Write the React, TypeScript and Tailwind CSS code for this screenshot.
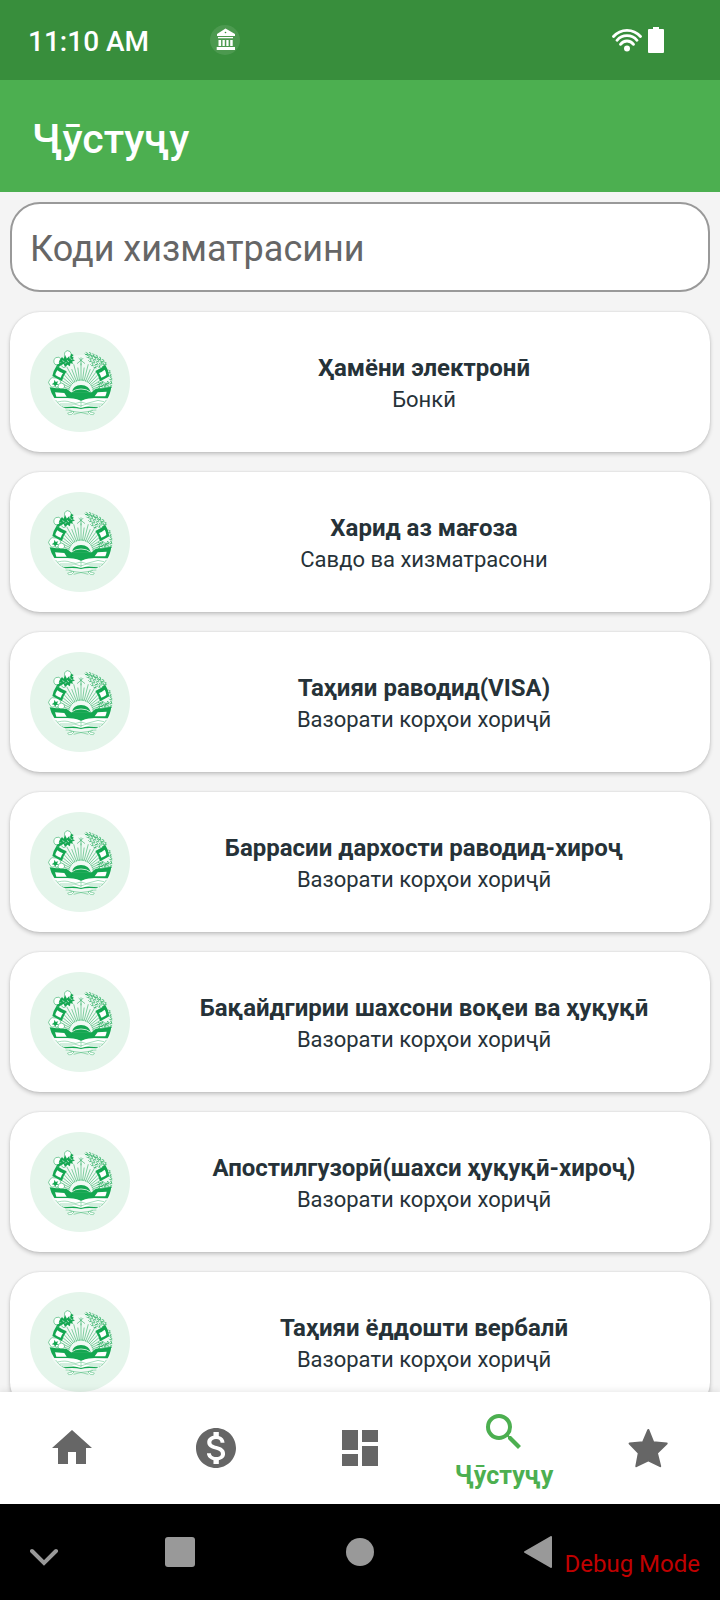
import { MdDashboard, MdHome, MdMonetizationOn, MdSearch } from "react-icons/md";

const services = [
  { title: "Ҳамёни электронӣ", category: "Бонкӣ" },
  { title: "Харид аз мағоза", category: "Савдо ва хизматрасони" },
  { title: "Таҳияи раводид(VISA)", category: "Вазорати корҳои хориҷӣ" },
  { title: "Баррасии дархости раводид-хироҷ", category: "Вазорати корҳои хориҷӣ" },
  { title: "Бақайдгирии шахсони воқеи ва ҳуқуқӣ", category: "Вазорати корҳои хориҷӣ" },
  { title: "Апостилгузорӣ(шахси ҳуқуқӣ-хироҷ)", category: "Вазорати корҳои хориҷӣ" },
  { title: "Таҳияи ёддошти вербалӣ", category: "Вазорати корҳои хориҷӣ" },
];

const rays = Array.from({ length: 25 }, (_, i) => {
  const angle = Math.PI * (1 + (i + 0.5) / 25);
  const end = i % 2 === 0 ? 88 : 76;
  return {
    x1: 108 + Math.cos(angle) * 36,
    y1: 143 + Math.sin(angle) * 36,
    x2: 108 + Math.cos(angle) * end,
    y2: 143 + Math.sin(angle) * end,
  };
});

const grains = [
  [122, 22], [132, 22], [142, 26], [152, 30], [162, 36], [171, 43], [178, 51], [127, 31],
  [137, 33], [147, 37], [156, 43], [165, 50], [173, 58], [133, 42], [143, 45], [152, 52],
  [160, 59], [139, 54], [148, 61], [190, 75], [193, 86], [195, 97], [195, 108], [194, 119],
  [186, 109], [185, 120], [177, 113], [176, 123], [168, 107], [167, 118], [159, 112], [159, 123],
];

const Emblem = () => (
  <svg viewBox="-45 -39 300 300" className="h-full w-full" fill="none" aria-hidden="true">
    <path d="M20 118a88 88 0 1 1 176 0v40q-22 44-88 44t-88-44z" fill="#fff" fillOpacity=".45" />
    {/* Sun */}
    <g stroke="#14a751" strokeWidth="2" strokeOpacity=".8">
      {rays.map((ray, i) => (
        <line key={i} {...ray} />
      ))}
      <path d="M71 142a37 37 0 0 1 74 0" strokeDasharray="4 3" />
    </g>
    <path d="M108 37v24M96 56l12-10 12 10M101 39l7 7 7-7" stroke="#14a751" strokeWidth="1.6" />
    {/* Wheat */}
    <g stroke="#14a751" strokeWidth="2.2" strokeOpacity=".85">
      {grains.map(([x, y]) => (
        <path key={`${x}-${y}`} d={`M${x} ${y}l6 3-5 5-4-4M${x + 2} ${y + 7}l5 1`} />
      ))}
      <path d="M121 28q48 6 57 37M188 108q-3 14-12 22" strokeWidth="1.4" />
    </g>
    {/* Cotton */}
    <g fill="#fff" stroke="#14a751" strokeWidth="1.6">
      <path d="M30 58q-8-11 2-20 11-5 17 5 7 7-1 15-8 7-18 0z" />
      <path d="M60 34q-5-13 7-17 10 0 12 10 3 13-7 15-9 0-12-8z" />
      <path d="M50 62q-3-10 5-14 10-1 11 8-1 11-9 12-6-1-7-6z" />
      <path d="M15 121q-9-9 0-18 5-8 16-4 9-4 14 7 5 9 1 17-14 6-18 2-8 5-13-4z" />
      <path d="M39 126q0-12 10-12 11 1 10 12-5 7-12 6-6-1-8-6z" />
    </g>
    <g fill="#14a751">
      <path d="M44 45l7-9 5 5 4-11 5 11 8-8 1 9 11-7-2 8 7 3-9 4 4 6-9-1-1 9-8-5-7 7-4-9-9 4 2-9-8 1z" />
      <path d="M34 59l8-3 2-5 5 3-2 8-8 5zM78 26l8 4-5 5 6 4-8 4-4-7zM29 104l3 7 8-2-4 6 4 4-7 1-2 6-4-7-7-1 6-4z" />
    </g>
    <path d="M52 47l6 3M66 46l6 5M77 42l5 2M60 56l4-5" stroke="#e5f5eb" strokeWidth="2" />
    {/* Ribbon */}
    <g fill="#14a751">
      <path d="M35 62q13 9 30 17-10 13-14 29-14-6-29-15 3-17 13-31z" />
      <path d="M181 60q-13 10-30 18 10 14 14 31 14-7 28-15-2-19-12-34z" />
      <path d="M14 127q22 5 50 4l14 11h62l13-11q24 0 46-6-3 22-11 35l-40-1q-20 0-29 5-11 7-22 0-9-5-29-5H28q-10-14-14-32z" />
      <path d="M80 143q4-23 28-23t30 23z" />
    </g>
    <path d="M37 76q8 6 17 9-5 6-7 13-9-3-16-8 1-7 6-14zM179 74q-8 7-17 10 5 7 7 14 9-3 15-8 0-8-5-16zM30 142l28 2 7 11H34q-2-7-4-13zM185 140l-27 2-9 12h32q3-7 4-14z" fill="#fff" />
    <path d="M80 141q10-9 28-9t28 9" stroke="#e5f5eb" strokeWidth="2.5" />
    {/* Book */}
    <path d="M30 162h48q24 0 30 7 8-7 30-7h46q-8 19-22 26-36-4-54 2-19-6-54-2-17-9-24-26z" fill="#fff" />
    <g stroke="#14a751" strokeWidth="1.5" strokeOpacity=".75">
      <path d="M32 165q9 15 23 22M184 165q-9 15-22 22M38 171q24-6 39 1t31-1q15 9 33 0t36-1M44 177h25q22-2 38 6 16-8 38-6h28M108 170v18" />
      <path d="M51 183h29l18 5M165 183h-30l-18 5" />
    </g>
    <path d="M53 187q37-5 55 2 17-7 53-2l-7 3q-30-3-46 2-17-5-47-2z" fill="#14a751" />
    <g stroke="#14a751" strokeWidth="1.7" strokeOpacity=".7" fill="#fff">
      <path d="M62 195q17-1 25 6l-7 7q-12 4-12-4l13-3M154 195q-17-1-25 6l7 7q12 4 12-4l-13-3" />
      <path d="M82 199q26 2 48 9M134 199q-26 2-48 9M73 196l8 5M143 196l-8 5" />
    </g>
  </svg>
);

const ServiceCard = ({ title, category }: { title: string; category: string }) => (
  <a
    href="#"
    className="flex h-[140px] shrink-0 items-center rounded-[30px] bg-white p-5 shadow-[0_2px_4px_rgba(0,0,0,0.2),0_0_2px_rgba(0,0,0,0.12)]"
  >
    <span className="h-[100px] w-[100px] shrink-0 rounded-full bg-[#e5f5eb]">
      <Emblem />
    </span>
    <span className="ml-7 flex flex-1 flex-col pt-1 text-center text-[#263238]">
      <span className="text-[24px] leading-8 font-bold">{title}</span>
      <span className="text-[22px] leading-8">{category}</span>
    </span>
  </a>
);

const StatusBar = () => (
  <div className="flex h-20 shrink-0 items-center bg-[#388e3c] px-7 text-white">
    <span className="pt-1 text-[28px] leading-8 font-medium">11:10 AM</span>
    <svg viewBox="0 0 30 30" className="ml-[61px] h-[30px] w-[30px]" fill="currentColor" aria-hidden="true">
      <circle cx="15" cy="15" r="15" fillOpacity=".1" />
      <path d="M15.500 3.500L25 9v2H7V9zM8 12h15v1.300H8zM8.500 15h2.600v6H8.500zM12.500 15h2.300v6h-2.300zM16.300 15h2.300v6h-2.300zM20.200 15h2.500v6h-2.500zM6.700 22h18.300v3H6.700z" />
      <circle cx="15.500" cy="7.500" r=".8" fill="#388e3c" />
    </svg>
    <div className="mr-7 ml-auto flex items-center gap-1.5">
      <svg viewBox="0 0 30 26" className="h-[26px] w-[30px]" fill="none" stroke="currentColor" strokeWidth="2.8" strokeLinecap="round" aria-hidden="true">
        <path d="M1.500 9.500Q7 3.300 15 3.300t13.500 6.200M5 13.300q4-4.600 10-4.600t10 4.600M8.500 17.300q2.500-3.300 6.500-3.300t6.500 3.300" />
        <circle cx="15" cy="21.500" r="3" fill="currentColor" stroke="none" />
      </svg>
      <svg viewBox="0 0 16 26" className="h-[26px] w-4" fill="currentColor" aria-hidden="true">
        <path d="M5 0h6v2h4q1 0 1 1v22q0 1-1 1H1q-1 0-1-1V3q0-1 1-1h4z" />
      </svg>
    </div>
  </div>
);

const BottomNav = () => (
  <nav className="z-10 grid h-28 shrink-0 grid-cols-5 bg-white text-[#666666] shadow-[0_0_8px_rgba(0,0,0,0.12)]">
    <button aria-label="Асосӣ" className="flex items-center justify-center">
      <MdHome className="h-12 w-12" />
    </button>
    <button aria-label="Пардохт" className="flex items-center justify-center">
      <MdMonetizationOn className="h-12 w-12" />
    </button>
    <button aria-label="Хизматҳо" className="flex items-center justify-center">
      <MdDashboard className="h-12 w-12" />
    </button>
    <button className="flex flex-col items-center pt-4 text-[#4caf50]">
      <MdSearch className="h-12 w-12" />
      <span className="text-[25px] leading-10 font-bold">Ҷӯстуҷу</span>
    </button>
    <button aria-label="Баргузидаҳо" className="flex items-center justify-center">
      <svg viewBox="0 0 48 48" className="h-12 w-12" fill="currentColor" stroke="currentColor" strokeWidth="2" strokeLinejoin="round" aria-hidden="true">
        <path d="M24.300 6l5 12.300 13.400 1.200-9.800 9.500 3.300 13.200-11.900-5.800-12 5.800 2.500-13.200L5.600 19.500l13.400-1.200z" />
      </svg>
    </button>
  </nav>
);

const SystemBar = () => (
  <div className="relative grid h-24 shrink-0 grid-cols-[1fr_2fr_2fr_2fr_1fr] items-center justify-items-center bg-black text-[#999999]">
    <button aria-label="Пинҳон">
      <svg viewBox="0 0 30 30" className="h-[30px] w-[30px]" fill="none" stroke="currentColor" strokeWidth="4" strokeLinecap="round" aria-hidden="true">
        <path d="M2 14l12 12 12-12" />
      </svg>
    </button>
    <button aria-label="Барномаҳо" className="h-[30px] w-[30px] rounded-[3px] bg-[#999999]" />
    <button aria-label="Хона" className="h-7 w-7 rounded-full bg-[#999999]" />
    <button aria-label="Бозгашт">
      <svg viewBox="0 0 32 32" className="h-8 w-8" fill="currentColor" stroke="currentColor" strokeWidth="2" strokeLinejoin="round" aria-hidden="true">
        <path d="M27 1v30L1 16z" />
      </svg>
    </button>
    <span className="absolute right-5 bottom-5 text-[24px] leading-8 text-[#c00000]">Debug Mode</span>
  </div>
);

export default function App() {
  return (
    <div className="flex h-screen flex-col overflow-hidden bg-[#f4f4f4] font-['Roboto','Noto_Sans',sans-serif]">
      <StatusBar />
      <header className="flex h-28 shrink-0 items-center bg-[#4caf50] px-8 pt-1.5 text-white">
        <h1 className="text-[41px] leading-12 font-medium">Ҷӯстуҷу</h1>
      </header>
      <main className="flex min-h-0 flex-1 flex-col gap-5 overflow-hidden p-2.5">
        <input
          type="text"
          aria-label="Коди хизматрасини"
          placeholder="Коди хизматрасини"
          className="h-[90px] w-full shrink-0 rounded-[30px] border-2 border-[#999999] bg-white px-[18px] pt-1 text-[36px] text-[#263238] placeholder:text-[#666666]"
        />
        {services.map((service) => (
          <ServiceCard key={service.title} {...service} />
        ))}
      </main>
      <BottomNav />
      <SystemBar />
    </div>
  );
}
